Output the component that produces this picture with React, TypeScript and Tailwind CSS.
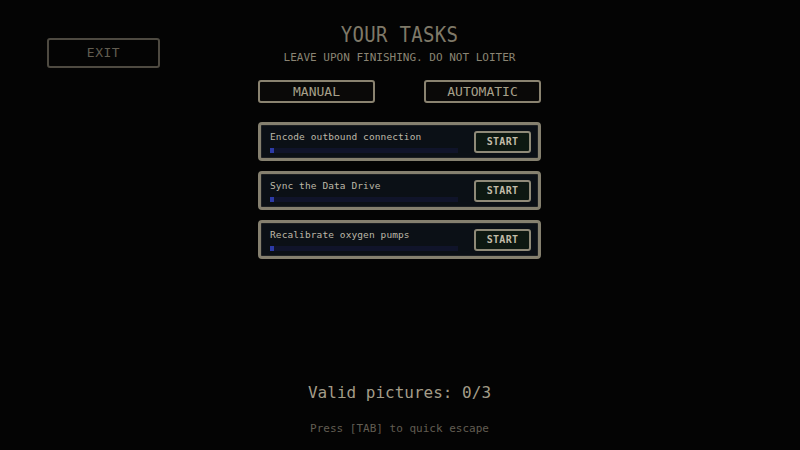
import React from "react";

const tasks = [
  { name: "Encode outbound connection", progress: 2 },
  { name: "Sync the Data Drive", progress: 2 },
  { name: "Recalibrate oxygen pumps", progress: 2 },
];

const mono = "font-['DejaVu_Sans_Mono','Liberation_Mono',monospace]";

function TaskCard({ name, progress }: { name: string; progress: number }) {
  return (
    <div className="h-[39px] rounded-[4px] border-[3px] border-[#85806f] bg-[#0b1016] shadow-[inset_0_0_0_1px_#1c1f22] flex items-center pl-[9px] pr-[7px]">
      <div className="flex-1 flex flex-col pt-[1px]">
        <div className="text-[9.5px] leading-[12px] text-[#bdb8a8] tracking-[0.1px]">{name}</div>
        <div className="mt-[5px] w-[188px] h-[5px] bg-[#10142a] flex">
          <div className="h-full bg-[#2c3aa6]" style={{ width: `${progress * 2}px` }} />
        </div>
      </div>
      <button className="w-[57px] h-[22px] rounded-[3px] border-2 border-[#8f8a78] bg-[#0d1811] text-[10px] font-bold text-[#c2bca8] tracking-[0.3px]">
        START
      </button>
    </div>
  );
}

export default function App() {
  return (
    <div className={`w-[800px] h-[450px] bg-[#040404] flex ${mono}`}>
      <div className="w-[258px] pl-[47px] pt-[38px]">
        <button className="w-[113px] h-[30px] rounded-[3px] border-2 border-[#4e4a41] text-[13px] text-[#625d51] tracking-[0.5px]">
          EXIT
        </button>
      </div>
      <div className="w-[283px] flex flex-col items-center">
        <div className="mt-[22px] text-[19px] leading-[24px] text-[#7f7968] tracking-[0.3px] scale-y-[1.15]">YOUR TASKS</div>
        <div className="mt-[5px] text-[11px] leading-[14px] text-[#8a8473]">LEAVE UPON FINISHING. DO NOT LOITER</div>
        <div className="mt-[15px] w-full flex justify-between">
          <button className="w-[117px] h-[23px] rounded-[3px] border-2 border-[#8a8370] bg-[#0a0908] text-[13px] text-[#a7a08a]">
            MANUAL
          </button>
          <button className="w-[117px] h-[23px] rounded-[3px] border-2 border-[#8a8370] bg-[#0a0908] text-[13px] text-[#a7a08a]">
            AUTOMATIC
          </button>
        </div>
        <div className="mt-[19px] w-full flex flex-col gap-[10px]">
          {tasks.map((t) => (
            <TaskCard key={t.name} name={t.name} progress={t.progress} />
          ))}
        </div>
        <div className="mt-[124px] text-[16px] leading-[20px] text-[#a39c88] whitespace-nowrap">Valid pictures: 0/3</div>
        <div className="mt-[19px] text-[11px] leading-[14px] text-[#625d52] whitespace-nowrap">Press [TAB] to quick escape</div>
      </div>
      <div className="flex-1" />
    </div>
  );
}
